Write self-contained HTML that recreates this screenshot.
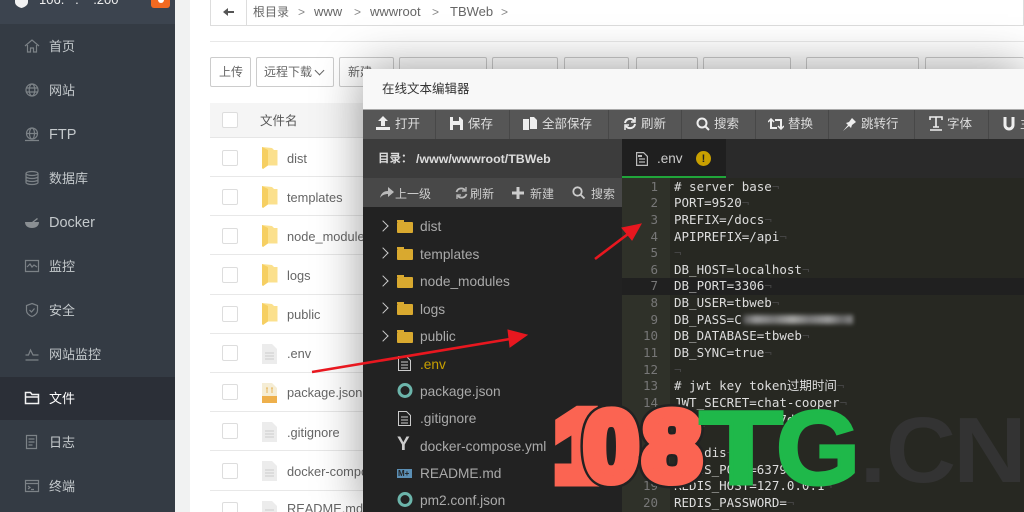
<!DOCTYPE html>
<html><head><meta charset="utf-8"><style>
*{box-sizing:border-box}
html,body{margin:0;padding:0;width:1024px;height:512px;overflow:hidden;background:#f1f2f2;font-family:"Liberation Sans","Noto Sans CJK SC",sans-serif}
.a,.a *{position:absolute}
.a{left:0;top:0}
.t{white-space:nowrap;line-height:16px}
.n{font-size:13px;color:#c4c9cc;left:49px}
.cb{left:222px;width:16px;height:16px;border:1px solid #ddd;border-radius:2px;background:#fff}
.rl{left:210px;width:200px;height:1px;background:#e8e8e8}
.fn{left:287px;font-size:12.8px;color:#666}
.btn{border:1px solid #ccc;border-radius:2px;background:#fff;height:30px;top:57px}
.tb{font-size:12.5px;color:#ddd;top:116px}
.sep{top:110px;width:1px;height:29px;background:#484848}
.lt{font-size:13.7px;color:#aaa;left:420px}
.ln{font:12.5px/16px "DejaVu Sans Mono",monospace;color:#777;left:622px;width:36px;text-align:right}
.c{font:12.5px/16px "DejaVu Sans Mono","Noto Sans CJK SC",monospace;color:#ddd;left:674px;white-space:pre}
.c i{position:static;font-style:normal;color:#444}
.chev{left:379px;width:8px;height:8px;border-top:1.6px solid #ccc;border-right:1.6px solid #ccc;transform:rotate(45deg)}
.fo{left:397px;width:16px;height:11px;background:#d9a92f;border-radius:1px}
.fo:before{content:"";position:absolute;left:0;top:-2px;width:7px;height:2px;background:#d9a92f}
.ic{fill:none;stroke:#7c8287;stroke-width:1.2}
.fd{left:262px;width:16px;height:23px}
</style></head><body><div class="a" style="width:1024px;height:512px;overflow:hidden;filter:blur(.35px)">

<!-- sidebar -->
<div style="left:0;top:0;width:175px;height:512px;background:#343b44"></div>
<div style="left:0;top:0;width:175px;height:24px;background:#3c444f"></div>
<div style="left:0;top:377px;width:175px;height:43px;background:#2b2f37"></div>
<svg style="left:14px;top:0" width="16" height="8"><path d="M1 0h13v2c0 3-3 5-6.500 6C4 7 1 5 1 2z" fill="#f2f2f2"/></svg>
<div class="t" style="left:39px;top:-8px;font-size:13px;color:#eee">106.&nbsp;&nbsp;&nbsp;.&nbsp;&nbsp;&nbsp;&nbsp;.200</div>
<div style="left:151px;top:0;width:19px;height:8px;background:#f26a21;border-radius:0 0 3px 3px"></div>
<div style="left:158px;top:0;width:6px;height:3px;background:#fff;border-radius:0 0 3px 3px"></div>

<svg class="ic" style="left:24px;top:38px" width="16" height="16"><path d="M1 8l7-6 7 6M3.500 7v7h3v-4h3v4h3V7"/></svg>
<div class="t n" style="top:39px">首页</div>
<svg class="ic" style="left:24px;top:82px" width="16" height="16"><circle cx="8" cy="8" r="6"/><ellipse cx="8" cy="8" rx="2.800" ry="6"/><path d="M2 6h12M2 10h12"/></svg>
<div class="t n" style="top:83px">网站</div>
<svg class="ic" style="left:24px;top:126px" width="16" height="16"><circle cx="8" cy="7.500" r="5.500"/><ellipse cx="8" cy="7.500" rx="2.500" ry="5.500"/><path d="M2.500 7.500h11M1 14.500h14"/></svg>
<div class="t n" style="top:127px;font-size:14.500px">FTP</div>
<svg class="ic" style="left:24px;top:170px" width="16" height="16"><ellipse cx="8" cy="3.500" rx="6" ry="2"/><path d="M2 3.500v9c0 1 2.500 2 6 2s6-1 6-2v-9M2 6.500c0 1 2.500 2 6 2s6-1 6-2M2 9.500c0 1 2.500 2 6 2s6-1 6-2"/></svg>
<div class="t n" style="top:171px">数据库</div>
<svg style="left:24px;top:214px" width="16" height="16"><path d="M1 8h14c0 4-3 6-7 6s-7-2-7-6zM8 8l5-4 1 1-4 3z" fill="#8a8f93"/></svg>
<div class="t n" style="top:215px;font-size:14.500px">Docker</div>
<svg class="ic" style="left:24px;top:258px" width="16" height="16"><path d="M1.500 2.500h13v11h-13zM3 9l3-3 2 3 2-2 3 2"/></svg>
<div class="t n" style="top:259px">监控</div>
<svg class="ic" style="left:24px;top:302px" width="16" height="16"><path d="M8 1.500l5.500 2v5c0 3-3 5-5.500 6-2.500-1-5.500-3-5.500-6v-5zM5.500 8l2 2 3-3.500"/></svg>
<div class="t n" style="top:303px">安全</div>
<svg class="ic" style="left:24px;top:346px" width="16" height="16"><path d="M1.500 9h3l2-5 2.500 5h5.500M1.500 14h13"/></svg>
<div class="t n" style="top:347px">网站监控</div>
<svg style="left:24px;top:390px;fill:none;stroke:#f2f2f2;stroke-width:1.500" width="16" height="16"><path d="M1.500 13.500v-11h5l1.500 2h6.500v9zM1.500 7h13"/></svg>
<div class="t n" style="top:391px;color:#fff">文件</div>
<svg class="ic" style="left:24px;top:434px" width="16" height="16"><path d="M2.500 1.500h10v13h-10zM4.500 5h6M4.500 8h6M4.500 11h4"/></svg>
<div class="t n" style="top:435px">日志</div>
<svg class="ic" style="left:24px;top:478px" width="16" height="16"><path d="M1.500 2.500h13v11h-13zM1.500 5.500h13M4 8l2 1.500L4 11M7 11.500h3"/></svg>
<div class="t n" style="top:479px">终端</div>

<!-- main panel -->
<div style="left:190px;top:0;width:834px;height:512px;background:#fff"></div>
<div style="left:210px;top:-2px;width:814px;height:28px;border:1px solid #ddd;background:#fff"></div>
<div style="left:246px;top:0;width:1px;height:26px;background:#ddd"></div>
<svg style="left:222px;top:6px" width="13" height="12"><path d="M1 6l5-4v3h6v2H6v3z" fill="#555"/></svg>
<div class="t" style="left:253px;top:4px;font-size:12px;color:#666">根目录</div>
<div class="t" style="left:298px;top:4px;font-size:12px;color:#888">&gt;</div>
<div class="t" style="left:314px;top:4px;font-size:13px;color:#666">www</div>
<div class="t" style="left:354px;top:4px;font-size:12px;color:#888">&gt;</div>
<div class="t" style="left:370px;top:4px;font-size:13px;color:#666">wwwroot</div>
<div class="t" style="left:432px;top:4px;font-size:12px;color:#888">&gt;</div>
<div class="t" style="left:450px;top:4px;font-size:13px;color:#666">TBWeb</div>
<div class="t" style="left:501px;top:4px;font-size:12px;color:#888">&gt;</div>
<div style="left:210px;top:41px;width:814px;height:1px;background:#e8e8e8"></div>

<div class="btn" style="left:210px;width:41px"></div>
<div class="t" style="left:219px;top:64px;font-size:12px;color:#666">上传</div>
<div class="btn" style="left:256px;width:78px"></div>
<div class="t" style="left:264px;top:64px;font-size:12px;color:#666">远程下载</div>
<div style="left:316px;top:67px;width:7px;height:7px;border-right:1px solid #666;border-bottom:1px solid #666;transform:rotate(45deg)"></div>
<div class="btn" style="left:339px;width:55px"></div>
<div class="t" style="left:348px;top:64px;font-size:12px;color:#666">新建</div>
<div class="btn" style="left:399px;width:88px"></div>
<div class="btn" style="left:492px;width:66px"></div>
<div class="btn" style="left:564px;width:65px"></div>
<div class="btn" style="left:636px;width:62px"></div>
<div class="btn" style="left:703px;width:88px"></div>
<div class="btn" style="left:806px;width:113px"></div>
<div class="btn" style="left:925px;width:99px;border-right:0"></div>

<div style="left:210px;top:103px;width:814px;height:35px;background:#f5f5f5"></div>
<div style="left:210px;top:137px;width:814px;height:1px;background:#e6e6e6"></div>
<div class="cb" style="top:112px"></div>
<div class="t" style="left:260px;top:113px;font-size:12.500px;color:#555">文件名</div>

<div class="rl" style="top:176px"></div><div class="rl" style="top:215px"></div><div class="rl" style="top:254px"></div><div class="rl" style="top:294px"></div><div class="rl" style="top:333px"></div><div class="rl" style="top:372px"></div><div class="rl" style="top:411px"></div><div class="rl" style="top:450px"></div><div class="rl" style="top:490px"></div>
<div class="cb" style="top:150px"></div><div class="cb" style="top:189px"></div><div class="cb" style="top:228px"></div><div class="cb" style="top:267px"></div><div class="cb" style="top:306px"></div><div class="cb" style="top:345px"></div><div class="cb" style="top:384px"></div><div class="cb" style="top:423px"></div><div class="cb" style="top:463px"></div><div class="cb" style="top:502px;height:10px;border-bottom:0;border-radius:2px 2px 0 0"></div>

<svg class="fd" style="top:147px"><path d="M0 0L10 1 12 3H15.500V18.500H5L1 22 0 21Z" fill="#fbe08d"/><path d="M0 0L6 3V18.500L1 22 0 21Z" fill="#f6cf62"/></svg>
<svg class="fd" style="top:186px"><path d="M0 0L10 1 12 3H15.500V18.500H5L1 22 0 21Z" fill="#fbe08d"/><path d="M0 0L6 3V18.500L1 22 0 21Z" fill="#f6cf62"/></svg>
<svg class="fd" style="top:225px"><path d="M0 0L10 1 12 3H15.500V18.500H5L1 22 0 21Z" fill="#fbe08d"/><path d="M0 0L6 3V18.500L1 22 0 21Z" fill="#f6cf62"/></svg>
<svg class="fd" style="top:264px"><path d="M0 0L10 1 12 3H15.500V18.500H5L1 22 0 21Z" fill="#fbe08d"/><path d="M0 0L6 3V18.500L1 22 0 21Z" fill="#f6cf62"/></svg>
<svg class="fd" style="top:303px"><path d="M0 0L10 1 12 3H15.500V18.500H5L1 22 0 21Z" fill="#fbe08d"/><path d="M0 0L6 3V18.500L1 22 0 21Z" fill="#f6cf62"/></svg>
<svg style="left:262px;top:344px" width="15" height="20"><path d="M0 0h10l5 5v15H0z" fill="#ececec"/><path d="M3 9h9M3 12h9M3 15h9" stroke="#ccc"/></svg>
<svg style="left:262px;top:383px" width="15" height="20"><path d="M0 0h10l5 5v15H0z" fill="#f5edd5"/><path d="M0 13h15v7H0z" fill="#eeb04c"/><path d="M4 5h2M9 5h2M5 5v5M10 5v5" stroke="#e8b860"/></svg>
<svg style="left:262px;top:422px" width="15" height="20"><path d="M0 0h10l5 5v15H0z" fill="#ececec"/><path d="M3 9h9M3 12h9M3 15h9" stroke="#ccc"/></svg>
<svg style="left:262px;top:461px" width="15" height="20"><path d="M0 0h10l5 5v15H0z" fill="#ececec"/><path d="M3 9h9M3 12h9M3 15h9" stroke="#ccc"/></svg>
<svg style="left:262px;top:501px" width="15" height="11"><path d="M0 0h10l5 5v15H0z" fill="#ececec"/><path d="M3 9h9" stroke="#ccc"/></svg>

<div class="t fn" style="top:151px">dist</div>
<div class="t fn" style="top:190px">templates</div>
<div class="t fn" style="top:229px">node_modules</div>
<div class="t fn" style="top:268px">logs</div>
<div class="t fn" style="top:307px">public</div>
<div class="t fn" style="top:346px">.env</div>
<div class="t fn" style="top:385px">package.json</div>
<div class="t fn" style="top:425px">.gitignore</div>
<div class="t fn" style="top:464px">docker-compose.yml</div>
<div class="t fn" style="top:501px;height:11px;overflow:hidden">README.md</div>

<!-- modal -->
<div style="left:363px;top:69px;width:661px;height:443px;background:#222;box-shadow:0 0 45px rgba(0,0,0,.4)"></div>
<div style="left:363px;top:69px;width:661px;height:40px;background:#f8f8f8"></div>
<div class="t" style="left:382px;top:81px;font-size:12.500px;color:#333">在线文本编辑器</div>
<div style="left:363px;top:109px;width:661px;height:1px;background:#aaa"></div>
<div style="left:363px;top:110px;width:661px;height:29px;background:#565656"></div>
<div class="sep" style="left:435px"></div><div class="sep" style="left:509px"></div><div class="sep" style="left:608px"></div><div class="sep" style="left:681px"></div><div class="sep" style="left:755px"></div><div class="sep" style="left:828px"></div><div class="sep" style="left:914px"></div><div class="sep" style="left:988px"></div>

<svg style="left:376px;top:116px" width="14" height="15"><path d="M7 0l5 5H9v5H5V5H2zM0 11h14v3H0z" fill="#eee"/></svg>
<div class="t tb" style="left:395px">打开</div>
<svg style="left:450px;top:117px" width="13" height="13"><path d="M0 0h10l3 3v10H0zM3 0v4h6V0zM3 8v5h7V8z" fill="#eee" fill-rule="evenodd"/></svg>
<div class="t tb" style="left:468px">保存</div>
<svg style="left:523px;top:117px" width="14" height="13"><path d="M0 2h6v11H0zM7 0h4l3 3v9H7z" fill="#eee"/></svg>
<div class="t tb" style="left:542px">全部保存</div>
<svg style="left:623px;top:117px;fill:none;stroke:#eee;stroke-width:2" width="14" height="13"><path d="M2 6a5 5 0 0 1 9-2M12 7a5 5 0 0 1-9 2"/><path d="M12 0v5H8M2 13V8h4" stroke-width="1.500"/></svg>
<div class="t tb" style="left:641px">刷新</div>
<svg style="left:696px;top:117px;fill:none;stroke:#eee;stroke-width:2" width="14" height="14"><circle cx="6" cy="6" r="4.500"/><path d="M9 9l4 4"/></svg>
<div class="t tb" style="left:714px">搜索</div>
<svg style="left:768px;top:118px;fill:none;stroke:#eee;stroke-width:2" width="16" height="12"><path d="M3 2v8h6M13 10V2H7"/><path d="M0 4l3-3 3 3M10 8l3 3 3-3" stroke-width="1.500"/></svg>
<div class="t tb" style="left:788px">替换</div>
<svg style="left:843px;top:117px" width="14" height="14"><path d="M0 14l5-6-2-2 3-1 3-4 4 4-4 3-1 3-2-2z" fill="#eee"/></svg>
<div class="t tb" style="left:861px">跳转行</div>
<svg style="left:929px;top:116px" width="14" height="15"><path d="M1 4V1h12v3M7 1v10M4 11h6M1 14h12" fill="none" stroke="#eee" stroke-width="1.600"/></svg>
<div class="t tb" style="left:947px">字体</div>
<svg style="left:1003px;top:117px" width="12" height="14"><path d="M2 0v8a4 4 0 0 0 8 0V0" fill="none" stroke="#eee" stroke-width="3"/></svg>
<div class="t tb" style="left:1020px;width:4px;overflow:hidden">主</div>

<!-- left tree -->
<div style="left:363px;top:139px;width:259px;height:39px;background:#3c3c3c"></div>
<div class="t" style="left:378px;top:151px;font-size:11.500px;font-weight:bold;color:#ddd">目录：</div>
<div class="t" style="left:416px;top:151px;font-size:12.400px;font-weight:bold;color:#ddd">/www/wwwroot/TBWeb</div>
<div style="left:363px;top:178px;width:259px;height:30px;background:#484848"></div>
<svg style="left:380px;top:187px" width="14" height="11"><path d="M0 11c1-5 4-7 8-7V0l6 5-6 5V7c-3 0-6 1-8 4z" fill="#bbb"/></svg>
<div class="t" style="left:395px;top:186px;font-size:12px;color:#ccc">上一级</div>
<svg style="left:455px;top:187px;fill:none;stroke:#bbb;stroke-width:1.800" width="13" height="12"><path d="M1.500 5a5 5 0 0 1 8.500-2M11.500 7a5 5 0 0 1-8.500 2"/><path d="M11 0v4H7M2 12V8h4" stroke-width="1.300"/></svg>
<div class="t" style="left:470px;top:186px;font-size:12px;color:#ccc">刷新</div>
<svg style="left:512px;top:187px" width="12" height="12"><path d="M4.500 0h3v4.500H12v3H7.500V12h-3V7.500H0v-3h4.500z" fill="#ccc"/></svg>
<div class="t" style="left:530px;top:186px;font-size:12px;color:#ccc">新建</div>
<svg style="left:572px;top:186px;fill:none;stroke:#ccc;stroke-width:1.800" width="13" height="13"><circle cx="5.500" cy="5.500" r="4.200"/><path d="M8.500 8.500l4 4"/></svg>
<div class="t" style="left:591px;top:186px;font-size:12px;color:#ccc">搜索</div>
<div style="left:363px;top:207px;width:259px;height:305px;background:#222"></div>

<div class="chev" style="top:222px"></div><div class="fo" style="top:222px"></div><div class="t lt" style="top:219px">dist</div>
<div class="chev" style="top:249px"></div><div class="fo" style="top:249px"></div><div class="t lt" style="top:247px">templates</div>
<div class="chev" style="top:277px"></div><div class="fo" style="top:277px"></div><div class="t lt" style="top:274px">node_modules</div>
<div class="chev" style="top:304px"></div><div class="fo" style="top:304px"></div><div class="t lt" style="top:302px">logs</div>
<div class="chev" style="top:332px"></div><div class="fo" style="top:332px"></div><div class="t lt" style="top:329px">public</div>
<svg style="left:398px;top:356px;fill:none;stroke:#ccc" width="13" height="15"><path d="M.5.500h8l4 4v10H.500zM3 6h7M3 9h7M3 12h7"/></svg>
<div class="t lt" style="top:357px;color:#c8a000">.env</div>
<svg style="left:397px;top:383px;fill:none;stroke:#6cb5ab;stroke-width:3" width="16" height="15"><ellipse cx="8" cy="7.500" rx="6" ry="6"/></svg>
<div class="t lt" style="top:384px">package.json</div>
<svg style="left:398px;top:411px;fill:none;stroke:#ccc" width="13" height="15"><path d="M.5.500h8l4 4v10H.500zM3 6h7M3 9h7M3 12h7"/></svg>
<div class="t lt" style="top:411px">.gitignore</div>
<div class="t" style="left:397px;top:437px;font-size:19px;font-weight:bold;color:#ccc">Y</div>
<div class="t lt" style="top:439px">docker-compose.yml</div>
<div style="left:397px;top:469px;width:15px;height:9px;background:#5b8fb5"></div>
<div class="t" style="left:398px;top:466px;font-size:8px;font-weight:bold;color:#222">M+</div>
<div class="t lt" style="top:466px">README.md</div>
<svg style="left:397px;top:492px;fill:none;stroke:#6cb5ab;stroke-width:3" width="16" height="15"><ellipse cx="8" cy="7.500" rx="6" ry="6"/></svg>
<div class="t lt" style="top:493px">pm2.conf.json</div>

<!-- tabs -->
<div style="left:622px;top:139px;width:402px;height:39px;background:#2a2a2a"></div>
<div style="left:622px;top:139px;width:104px;height:39px;background:#1f1f1f"></div>
<div style="left:622px;top:176px;width:104px;height:2px;background:#20a53a"></div>
<svg style="left:636px;top:152px;fill:none;stroke:#bbb;stroke-width:1.200" width="12" height="14"><path d="M.6.600h7l3.800 3.800v9H.600zM3 7h6M3 10h6"/><path d="M2 3h4v2H2z" fill="#bbb" stroke="none"/></svg>
<div class="t" style="left:657px;top:151px;font-size:13.500px;color:#ccc">.env</div>
<div style="left:696px;top:151px;width:15px;height:15px;border-radius:50%;background:#c8a000"></div>
<div class="t" style="left:696px;top:151px;width:15px;text-align:center;font-size:11px;font-weight:bold;color:#222">!</div>

<!-- code -->
<div style="left:622px;top:178px;width:402px;height:334px;background:#272822"></div>
<div style="left:622px;top:178px;width:48px;height:334px;background:#2f3129"></div>
<div style="left:622px;top:278px;width:402px;height:17px;background:#202020"></div>
<div class="t ln" style="top:179px">1</div><div class="t ln" style="top:195px">2</div><div class="t ln" style="top:212px">3</div><div class="t ln" style="top:229px">4</div><div class="t ln" style="top:245px">5</div><div class="t ln" style="top:262px">6</div><div class="t ln" style="top:278px">7</div><div class="t ln" style="top:295px">8</div><div class="t ln" style="top:312px">9</div><div class="t ln" style="top:328px">10</div><div class="t ln" style="top:345px">11</div><div class="t ln" style="top:362px">12</div><div class="t ln" style="top:378px">13</div><div class="t ln" style="top:395px">14</div><div class="t ln" style="top:478px">19</div><div class="t ln" style="top:495px">20</div>
<div class="c" style="top:179px"># server base<i>¬</i></div>
<div class="c" style="top:195px">PORT=9520<i>¬</i></div>
<div class="c" style="top:212px">PREFIX=/docs<i>¬</i></div>
<div class="c" style="top:229px">APIPREFIX=/api<i>¬</i></div>
<div class="c" style="top:245px"><i>¬</i></div>
<div class="c" style="top:262px">DB_HOST=localhost<i>¬</i></div>
<div class="c" style="top:278px">DB_PORT=3306<i>¬</i></div>
<div class="c" style="top:295px">DB_USER=tbweb<i>¬</i></div>
<div class="c" style="top:312px">DB_PASS=C</div>
<div style="left:743px;top:315px;width:110px;height:9px;background:linear-gradient(90deg,#555 0,#999 12%,#777 28%,#a5a5a3 45%,#777 60%,#999 78%,#666 90%,#888 100%);filter:blur(2px)"></div>
<div class="c" style="top:328px">DB_DATABASE=tbweb<i>¬</i></div>
<div class="c" style="top:345px">DB_SYNC=true<i>¬</i></div>
<div class="c" style="top:362px"><i>¬</i></div>
<div class="c" style="top:378px"># jwt key token过期时间<i>¬</i></div>
<div class="c" style="top:395px">JWT_SECRET=chat-cooper<i>¬</i></div>
<div class="c" style="top:412px">JWT_EXPIRESIN=7d<i>¬</i></div>
<div class="c" style="top:445px"># redis<i>¬</i></div>
<div class="c" style="top:462px">REDIS_PORT=6379<i>¬</i></div>
<div class="c" style="top:478px">REDIS_HOST=127.0.0.1<i>¬</i></div>
<div class="c" style="top:495px">REDIS_PASSWORD=<i>¬</i></div>

<!-- arrows and watermark -->
<svg style="left:0;top:0" width="1024" height="512">
<path d="M629 430l-5 5 5 5" fill="none" stroke="#ddd" stroke-width="2.500"/>
<path d="M312 372L510 339" stroke="#e8171f" stroke-width="2.600" fill="none"/>
<path d="M527 335L510 347 508 330z" fill="#e8171f" stroke="#e8171f"/>
<path d="M595 259L628 234" stroke="#e8171f" stroke-width="2.600" fill="none"/>
<path d="M641 224L632 240 622 228z" fill="#e8171f" stroke="#e8171f"/>

<g font-family="Liberation Sans" font-weight="bold" fill="#333">
<text x="860" y="482" font-size="93">.</text>
<text x="886" y="482" font-size="93" textLength="70" lengthAdjust="spacingAndGlyphs">C</text>
<text x="953" y="482" font-size="93" textLength="74" lengthAdjust="spacingAndGlyphs">N</text>
</g>
<g font-family="Liberation Sans" font-weight="bold" font-size="98">
<text x="555" y="480" fill="#fb6452" stroke="#fb6452" stroke-width="13">1</text>
<text x="584" y="480" fill="#222" stroke="#222" stroke-width="15">0</text>
<text x="584" y="480" fill="#fb6452" stroke="#fb6452" stroke-width="10">0</text>
<text x="643" y="480" textLength="58" lengthAdjust="spacingAndGlyphs" fill="#222" stroke="#222" stroke-width="15">8</text>
<text x="643" y="480" textLength="58" lengthAdjust="spacingAndGlyphs" fill="#fb6452" stroke="#fb6452" stroke-width="10">8</text>
</g>
<g font-family="Liberation Sans" font-weight="bold" font-size="105" fill="#1fb84a" stroke="#1fb84a" stroke-width="3">
<text x="699" y="484" textLength="84" lengthAdjust="spacingAndGlyphs">T</text>
<text x="776" y="484" textLength="84" lengthAdjust="spacingAndGlyphs">G</text>
</g>
</svg>
</div></body></html>
